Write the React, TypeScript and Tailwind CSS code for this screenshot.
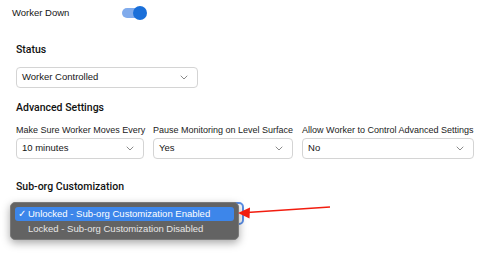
import React from 'react';

const Chevron: React.FC = () => (
  <svg width="8" height="5" viewBox="0 0 8 5" fill="none" className="shrink-0">
    <path d="M1 1l3 3 3-3" stroke="#8a8a8a" strokeWidth="1" strokeLinecap="round" strokeLinejoin="round" />
  </svg>
);

const Select: React.FC<{ value: string; className?: string }> = ({ value, className }) => (
  <div
    className={`h-[21px] flex items-center justify-between pl-[5px] pr-[9px] border border-[#d4d4d4] rounded-[4px] bg-white text-[9.5px] text-[#161616] ${className ?? ''}`}
  >
    <span>{value}</span>
    <Chevron />
  </div>
);

const Field: React.FC<{ label: string; value: string; width: string }> = ({ label, value, width }) => (
  <div className={`flex flex-col ${width}`}>
    <span className="text-[9px] leading-[11px] text-[#222] whitespace-nowrap">{label}</span>
    <Select value={value} className="mt-[2px]" />
  </div>
);

const Heading: React.FC<{ children: React.ReactNode; className?: string }> = ({ children, className }) => (
  <div
    className={`text-[10.5px] font-medium leading-[12px] text-[#111] ${className ?? ''}`}
    style={{ fontFamily: 'Roboto, "Liberation Sans", sans-serif' }}
  >
    {children}
  </div>
);

export default function App() {
  return (
    <div
      className="relative w-[487px] h-[267px] overflow-hidden bg-white text-[#161616]"
      style={{ fontFamily: '"Liberation Sans", Arial, sans-serif' }}
    >
      {/* top toggle row */}
      <div className="flex items-center pl-[12px] mt-[6px] h-[14px]">
        <span className="w-[110px] text-[9.5px]">Worker Down</span>
        <div className="relative w-[25px] h-[14px] flex items-center">
          <div className="w-[22px] h-[10px] rounded-full bg-[#80abec]" />
          <div className="absolute right-0 top-0 w-[14px] h-[14px] rounded-full bg-[#1a6fd9]" />
        </div>
      </div>

      <div className="px-[16px]">
        <Heading className="mt-[24px]">Status</Heading>
        <Select value="Worker Controlled" className="mt-[11px] w-[182px]" />

        <Heading className="mt-[14px]">Advanced Settings</Heading>
        <div className="mt-[11px] flex gap-[9px]">
          <Field label="Make Sure Worker Moves Every" value="10 minutes" width="w-[128px]" />
          <Field label="Pause Monitoring on Level Surface" value="Yes" width="w-[141px]" />
          <Field label="Allow Worker to Control Advanced Settings" value="No" width="w-[172px]" />
        </div>

        <Heading className="mt-[22px]">Sub-org Customization</Heading>
        <div className="mt-[9px] w-[228px] h-[23px] rounded-[5px] border-2 border-[#5b8fe8] bg-white" />
      </div>

      {/* open native dropdown */}
      <div className="absolute left-[10px] top-[202px] w-[229px] h-[38px] rounded-[5px] bg-[#636363] border border-[#7a7a7a] shadow-[0_3px_8px_rgba(0,0,0,0.35)] px-[4px] pt-[4px] text-[9.5px] leading-[14px]">
        <div className="flex items-center h-[14px] rounded-[3px] bg-[#3d86ea] text-white pl-[3px]">
          <span className="w-[10px]">✓</span>
          <span>Unlocked - Sub-org Customization Enabled</span>
        </div>
        <div className="flex items-center h-[16px] text-[#e6e6e6] pl-[13px]">
          Locked - Sub-org Customization Disabled
        </div>
      </div>

      {/* red annotation arrow */}
      <svg className="absolute left-0 top-0" width="487" height="267" viewBox="0 0 487 267">
        <line x1="330" y1="207" x2="247" y2="212.5" stroke="#f21d0f" strokeWidth="1.6" />
        <path d="M238 213 L250 207.5 L249.5 218.5 Z" fill="#f21d0f" />
      </svg>
    </div>
  );
}
